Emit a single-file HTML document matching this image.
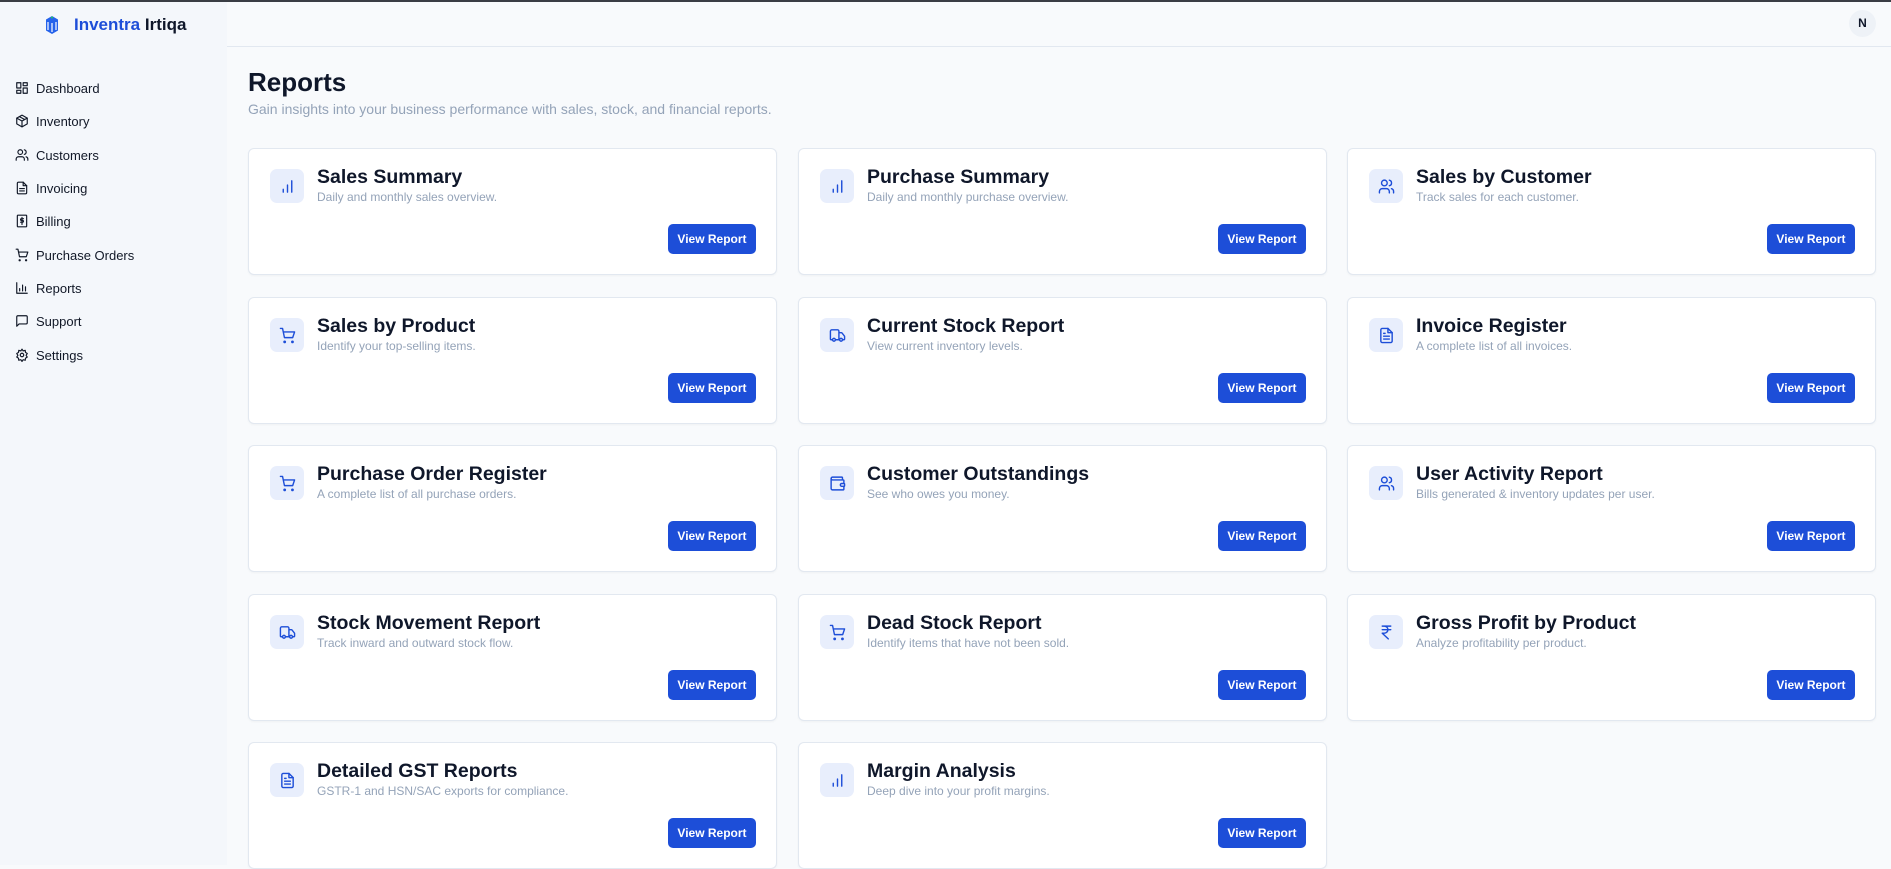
<!DOCTYPE html>
<html><head><meta charset="utf-8"><style>
*{box-sizing:border-box;margin:0;padding:0}
body{width:1891px;height:865px;overflow:hidden;background:#f8fafc;font-family:"Liberation Sans",sans-serif;position:relative}
.topline{position:absolute;left:0;top:0;width:100%;height:2px;background:#3a3d44;z-index:5}
.side{position:absolute;left:0;top:0;width:227px;height:865px;background:#f4f7fb}
.logo{position:absolute;left:45px;top:15px;display:flex;align-items:center}
.logo b{font-size:17px;margin-left:15px;color:#1d4ed8}
.logo b span{color:#0f172a}
.nav{position:absolute;left:0;top:0}
.nav div{position:absolute;left:15px;height:20px;display:flex;align-items:center;font-size:13px;color:#111827;white-space:nowrap}
.nav svg{width:14px;height:14px;margin-right:7px;fill:none;stroke:#111827;stroke-width:2;stroke-linecap:round;stroke-linejoin:round}
.head{position:absolute;left:227px;top:0;right:0;height:47px;border-bottom:1px solid #e2e8f0}
.av{position:absolute;right:15px;top:10px;width:27px;height:27px;border-radius:50%;background:#eef2f7;font-size:12px;font-weight:bold;color:#0f172a;text-align:center;line-height:27px}
h1{position:absolute;left:248px;top:67px;font-size:26px;color:#0f172a}
.sub{position:absolute;left:248px;top:101px;font-size:14px;color:#94a3b8}
.card{position:absolute;width:529px;height:127px;background:#fff;border:1px solid #e2e8f0;border-radius:6px;box-shadow:0 1px 2px rgba(0,0,0,.04)}
.ic{position:absolute;left:21px;top:20px;width:34px;height:34px;border-radius:7px;background:#e8eefc;display:flex;align-items:center;justify-content:center}
.ic svg{width:17px;height:17px;fill:none;stroke:#1d4ed8;stroke-width:2;stroke-linecap:round;stroke-linejoin:round}
.t{position:absolute;left:68px;top:17px;font-size:19.5px;font-weight:bold;color:#0f172a;white-space:nowrap}
.d{position:absolute;left:68px;top:41px;font-size:12px;color:#94a3b8;white-space:nowrap}
.btn{position:absolute;right:20px;bottom:20px;width:88px;height:30px;border-radius:5px;background:#1d4ed8;color:#fff;font-size:12px;font-weight:bold;text-align:center;line-height:30px}
</style></head><body>
<div class="topline"></div>
<div class="side">
<div class="logo"><svg width="14" height="20" viewBox="0 0 14 20"><path d="M7 1L13 4.5V15.5L7 19L1 15.5V4.5Z" fill="#2563eb"/><path d="M3 7V15M7 8V17M11 7V15" stroke="#fff" stroke-width="1.2"/><path d="M6 2.5h2" stroke="#22c55e" stroke-width="1.5"/></svg><b>Inventra <span>Irtiqa</span></b></div>
<div class="nav">
<div style="top:78px"><svg viewBox="0 0 24 24"><rect x="3" y="3" width="7" height="9"/><rect x="14" y="3" width="7" height="5"/><rect x="14" y="12" width="7" height="9"/><rect x="3" y="16" width="7" height="5"/></svg>Dashboard</div>
<div style="top:111px"><svg viewBox="0 0 24 24"><path d="M12 2l9 5v10l-9 5-9-5V7z"/><path d="M3 7l9 5 9-5M12 12v10M7.5 4.5l9 5"/></svg>Inventory</div>
<div style="top:145px"><svg viewBox="0 0 24 24"><circle cx="9" cy="7" r="4"/><path d="M2 21v-2a4 4 0 014-4h6a4 4 0 014 4v2M16 3.1a4 4 0 010 7.8M22 21v-2a4 4 0 00-3-3.9"/></svg>Customers</div>
<div style="top:178px"><svg viewBox="0 0 24 24"><path d="M14 2H6a2 2 0 00-2 2v16a2 2 0 002 2h12a2 2 0 002-2V8z"/><path d="M14 2v6h6M8 13h8M8 17h8"/></svg>Invoicing</div>
<div style="top:211px"><svg viewBox="0 0 24 24"><rect x="4" y="2" width="16" height="20" rx="1"/><path d="M14.5 8h-3.5a1.5 1.5 0 000 3h2a1.5 1.5 0 010 3H9.5M12 6v12"/></svg>Billing</div>
<div style="top:245px"><svg viewBox="0 0 24 24"><circle cx="8" cy="21" r="1"/><circle cx="19" cy="21" r="1"/><path d="M2 2h3l2.7 13h11.6L22 7H6"/></svg>Purchase Orders</div>
<div style="top:278px"><svg viewBox="0 0 24 24"><path d="M3 3v18h18M8 17v-4M13 17V7M18 17v-7"/></svg>Reports</div>
<div style="top:311px"><svg viewBox="0 0 24 24"><path d="M21 15a2 2 0 01-2 2H7l-4 4V5a2 2 0 012-2h14a2 2 0 012 2z"/></svg>Support</div>
<div style="top:345px"><svg viewBox="0 0 24 24"><circle cx="12" cy="12" r="3"/><path d="M12 2l2 3 3.5-1 .5 3.5 3 2-2 3 2 3-3 2-.5 3.5-3.5-1-2 3-2-3-3.5 1-.5-3.5-3-2 2-3-2-3 3-2 .5-3.5 3.5 1z"/></svg>Settings</div>
</div></div>
<div class="head"><div class="av">N</div></div>
<h1>Reports</h1>
<div class="sub">Gain insights into your business performance with sales, stock, and financial reports.</div>
<svg width="0" height="0" style="position:absolute"><defs>
<g id="bar"><path d="M6 20v-4M12 20V10M18 20V4"/></g>
<g id="users"><circle cx="9" cy="7" r="4"/><path d="M2 21v-2a4 4 0 014-4h6a4 4 0 014 4v2M16 3.1a4 4 0 010 7.8M22 21v-2a4 4 0 00-3-3.9"/></g>
<g id="cart"><circle cx="8" cy="21" r="1"/><circle cx="19" cy="21" r="1"/><path d="M2 2h3l2.7 13h11.6L22 7H6"/></g>
<g id="truck"><path d="M14 18V6a2 2 0 00-2-2H4a2 2 0 00-2 2v11a1 1 0 001 1h2M15 18H9M19 18h2a1 1 0 001-1v-3.6a1 1 0 00-.2-.6l-3.5-4.4A1 1 0 0017.5 8H14"/><circle cx="17" cy="18" r="2"/><circle cx="7" cy="18" r="2"/></g>
<g id="file"><path d="M14 2H6a2 2 0 00-2 2v16a2 2 0 002 2h12a2 2 0 002-2V8z"/><path d="M14 2v6h6M8 13h8M8 17h8M8 9h2"/></g>
<g id="wallet"><path d="M19 7V4a1 1 0 00-1-1H5a2 2 0 000 4h15a1 1 0 011 1v4h-3a2 2 0 000 4h3a1 1 0 001-1v-2a1 1 0 00-1-1"/><path d="M3 5v14a2 2 0 002 2h15a1 1 0 001-1v-4"/></g>
<g id="rupee"><path d="M6 3h12M6 8h12M6 13l8.5 8M6 13h3a5 5 0 000-10"/></g>
</defs></svg>
<div class="card" style="left:248px;top:148px"><div class="ic"><svg viewBox="0 0 24 24"><use href="#bar"/></svg></div><div class="t">Sales Summary</div><div class="d">Daily and monthly sales overview.</div><div class="btn">View Report</div></div>
<div class="card" style="left:798px;top:148px"><div class="ic"><svg viewBox="0 0 24 24"><use href="#bar"/></svg></div><div class="t">Purchase Summary</div><div class="d">Daily and monthly purchase overview.</div><div class="btn">View Report</div></div>
<div class="card" style="left:1347px;top:148px"><div class="ic"><svg viewBox="0 0 24 24"><use href="#users"/></svg></div><div class="t">Sales by Customer</div><div class="d">Track sales for each customer.</div><div class="btn">View Report</div></div>
<div class="card" style="left:248px;top:297px"><div class="ic"><svg viewBox="0 0 24 24"><use href="#cart"/></svg></div><div class="t">Sales by Product</div><div class="d">Identify your top-selling items.</div><div class="btn">View Report</div></div>
<div class="card" style="left:798px;top:297px"><div class="ic"><svg viewBox="0 0 24 24"><use href="#truck"/></svg></div><div class="t">Current Stock Report</div><div class="d">View current inventory levels.</div><div class="btn">View Report</div></div>
<div class="card" style="left:1347px;top:297px"><div class="ic"><svg viewBox="0 0 24 24"><use href="#file"/></svg></div><div class="t">Invoice Register</div><div class="d">A complete list of all invoices.</div><div class="btn">View Report</div></div>
<div class="card" style="left:248px;top:445px"><div class="ic"><svg viewBox="0 0 24 24"><use href="#cart"/></svg></div><div class="t">Purchase Order Register</div><div class="d">A complete list of all purchase orders.</div><div class="btn">View Report</div></div>
<div class="card" style="left:798px;top:445px"><div class="ic"><svg viewBox="0 0 24 24"><use href="#wallet"/></svg></div><div class="t">Customer Outstandings</div><div class="d">See who owes you money.</div><div class="btn">View Report</div></div>
<div class="card" style="left:1347px;top:445px"><div class="ic"><svg viewBox="0 0 24 24"><use href="#users"/></svg></div><div class="t">User Activity Report</div><div class="d">Bills generated &amp; inventory updates per user.</div><div class="btn">View Report</div></div>
<div class="card" style="left:248px;top:594px"><div class="ic"><svg viewBox="0 0 24 24"><use href="#truck"/></svg></div><div class="t">Stock Movement Report</div><div class="d">Track inward and outward stock flow.</div><div class="btn">View Report</div></div>
<div class="card" style="left:798px;top:594px"><div class="ic"><svg viewBox="0 0 24 24"><use href="#cart"/></svg></div><div class="t">Dead Stock Report</div><div class="d">Identify items that have not been sold.</div><div class="btn">View Report</div></div>
<div class="card" style="left:1347px;top:594px"><div class="ic"><svg viewBox="0 0 24 24"><use href="#rupee"/></svg></div><div class="t">Gross Profit by Product</div><div class="d">Analyze profitability per product.</div><div class="btn">View Report</div></div>
<div class="card" style="left:248px;top:742px"><div class="ic"><svg viewBox="0 0 24 24"><use href="#file"/></svg></div><div class="t">Detailed GST Reports</div><div class="d">GSTR-1 and HSN/SAC exports for compliance.</div><div class="btn">View Report</div></div>
<div class="card" style="left:798px;top:742px"><div class="ic"><svg viewBox="0 0 24 24"><use href="#bar"/></svg></div><div class="t">Margin Analysis</div><div class="d">Deep dive into your profit margins.</div><div class="btn">View Report</div></div>
</body></html>
